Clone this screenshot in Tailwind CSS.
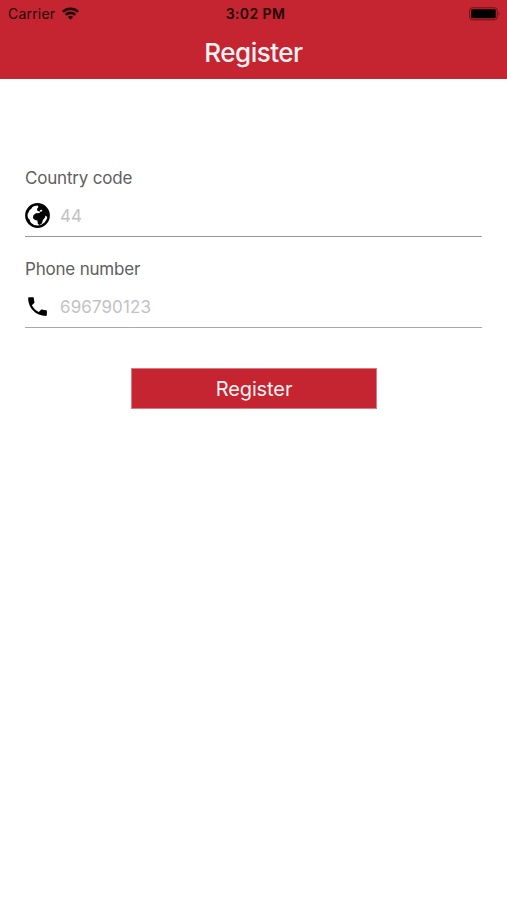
<!DOCTYPE html>
<html lang="en">
<head>
<meta charset="utf-8">
<title>Register</title>
<script src="https://cdn.jsdelivr.net/npm/@tailwindcss/browser@4"></script>
</head>
<body class="bg-white">
<div class="flex h-[900px] w-[507px] flex-col overflow-hidden bg-white font-['Inter','Liberation_Sans',sans-serif]">
  <header class="h-[79px] bg-[#c52431]">
    <div class="grid h-[27px] grid-cols-3 items-center pl-2 pr-1.5 text-[#210508]">
      <div class="flex items-center gap-[7px]">
        <span class="text-[14px] leading-[27px] tracking-[0.2px]">Carrier</span>
        <svg class="h-[13px] w-[17px]" viewBox="0 0 17 13" fill="none" stroke="currentColor" stroke-width="2.6"><path d="M.9 4.9a10.8 10.8 0 0 1 15.2 0M3.7 7.9a6.8 6.8 0 0 1 9.6 0"/><path d="M8.5 12.7 5.9 10a3.7 3.7 0 0 1 5.2 0z" fill="currentColor" stroke="none"/></svg>
      </div>
      <span class="pl-[2px] text-center text-[14px] font-semibold leading-[27px] tracking-[0.4px]">3:02 PM</span>
      <svg class="h-[14px] w-[32px] justify-self-end" viewBox="0 0 32 14"><rect x=".7" y=".8" width="27.5" height="12" rx="2.6" fill="none" stroke="#6d1119"/><rect x="2.2" y="2.3" width="24.5" height="9" rx="1" fill="#000"/><path d="M29.7 4.7q2 2 0 4z" fill="#6d1119"/></svg>
    </div>
    <h1 class="text-center text-[26px] font-medium leading-[52px] tracking-[-0.5px] text-[#fff2f3]">Register</h1>
  </header>
  <main class="flex flex-col px-[25px] pt-[87px]">
    <label for="code" class="h-[24px] text-[17px] leading-[24px] tracking-[-0.2px] text-[#606060]">Country code</label>
    <div class="flex h-[47px] items-center gap-[10px] border-b border-[#999] pt-[5px]">
      <svg class="size-[25px]" viewBox="0 0 25 25"><circle cx="12.5" cy="12.5" r="11.2" fill="#fff" stroke="#000" stroke-width="2.4"/><path d="M12.4 2 17 2l4.5 4 2.3 5-.2 3-1.7-.3-1.4-1.2-.5 2.1-2.2 2.6-.8 3-2.3 1.7-1.8-.8-.5-3.6-2.5-.6-2-1.9.5-2.8 2.5-2 3.8-.1.2-1.5-2.4-.7-.5-2 1.4-2z"/><path d="m14.8 7.2 2.1-.5.5 1.5-2.3.5z" fill="#fff"/><path d="M2 9 5.5 3.8 8.4 2 6.5 5.5 4.3 7.5 3 10.5zM1.9 14.5l2.5 1.8.8 2.2 1.6 3.5-3.2-3z"/></svg>
      <input id="code" placeholder="44" class="min-w-0 flex-1 bg-transparent text-[17px] leading-6 text-[#606060] outline-none placeholder:text-[#c2c2c4]">
    </div>
    <label for="phone" class="mt-[20px] h-[24px] text-[17px] leading-[24px] tracking-[-0.2px] text-[#606060]">Phone number</label>
    <div class="flex h-[47px] items-center gap-[10px] border-b border-[#aaa] pt-[5px]">
      <svg class="size-[25px]" viewBox="0 0 24 24"><path d="M6.62 10.79c1.44 2.83 3.76 5.14 6.59 6.59l2.2-2.2c.27-.27.67-.36 1.02-.24 1.12.37 2.33.57 3.57.57.55 0 1 .45 1 1V20c0 .55-.45 1-1 1-9.39 0-17-7.61-17-17 0-.55.45-1 1-1h3.5c.55 0 1 .45 1 1 0 1.25.2 2.45.57 3.57.11.35.03.74-.25 1.02z"/></svg>
      <input id="phone" placeholder="696790123" class="min-w-0 flex-1 bg-transparent text-[17px] leading-6 tracking-[0.1px] text-[#606060] outline-none placeholder:text-[#c2c2c4]">
    </div>
    <button class="ml-[106px] mt-[40px] h-[41px] w-[246px] border border-[#dc7881] bg-[#c52431] text-[20px] leading-[38px] tracking-[-0.1px] text-[#fff2f3]">Register</button>
  </main>
</div>
</body>
</html>
